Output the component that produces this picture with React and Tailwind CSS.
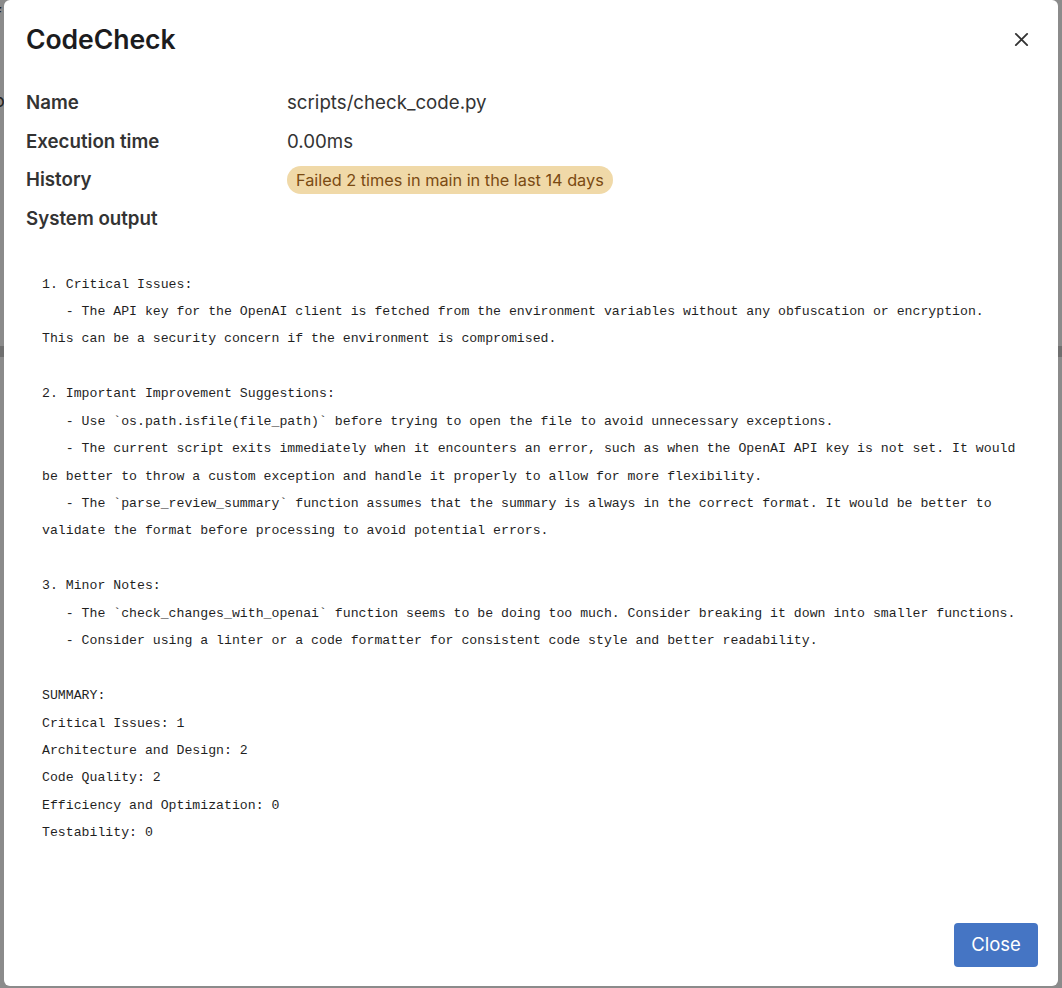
import React from "react";

const lines = [
  "1. Critical Issues:",
  "   - The API key for the OpenAI client is fetched from the environment variables without any obfuscation or encryption.",
  "This can be a security concern if the environment is compromised.",
  "",
  "2. Important Improvement Suggestions:",
  "   - Use `os.path.isfile(file_path)` before trying to open the file to avoid unnecessary exceptions.",
  "   - The current script exits immediately when it encounters an error, such as when the OpenAI API key is not set. It would",
  "be better to throw a custom exception and handle it properly to allow for more flexibility.",
  "   - The `parse_review_summary` function assumes that the summary is always in the correct format. It would be better to",
  "validate the format before processing to avoid potential errors.",
  "",
  "3. Minor Notes:",
  "   - The `check_changes_with_openai` function seems to be doing too much. Consider breaking it down into smaller functions.",
  "   - Consider using a linter or a code formatter for consistent code style and better readability.",
  "",
  "SUMMARY:",
  "Critical Issues: 1",
  "Architecture and Design: 2",
  "Code Quality: 2",
  "Efficiency and Optimization: 0",
  "Testability: 0",
];

function Strip({ side }) {
  return (
    <div className="w-[4px] h-full flex flex-col overflow-hidden">
      <div className="h-[346px] relative overflow-hidden">
        {side === "left" && (
          <>
            <span className="absolute left-[-5px] top-[4px] text-[18px] text-[#222] leading-[22px] font-['Inter',sans-serif]">f</span>
            <span className="absolute left-[-6px] top-[90px] text-[18px] text-[#222] leading-[22px] font-['Inter',sans-serif]">o</span>
          </>
        )}
      </div>
      <div className="h-[11px] bg-[#6f6f6f]"></div>
      <div className="flex-1"></div>
    </div>
  );
}

export default function App() {
  return (
    <div className="w-full h-[988px] bg-[#8b8b8b] flex overflow-hidden font-['Inter',sans-serif]">
      <Strip side="left" />
      <div className="flex-1 h-[986px] bg-white rounded-[6px] flex flex-col pl-[22px] pr-[20px]">
        <div className="flex items-center justify-between pt-[23px]">
          <h1 className="text-[26.6px] leading-[32px] font-semibold text-[#1c1c1e] tracking-[-0.1px]">CodeCheck</h1>
          <button className="w-[24px] h-[24px] flex items-center justify-center mr-[5px] text-[#333]">
            <svg width="15" height="15" viewBox="0 0 16 16" fill="none" stroke="currentColor" strokeWidth="2" strokeLinecap="round">
              <path d="M2 2L14 14M14 2L2 14" />
            </svg>
          </button>
        </div>
        <div className="mt-[29px] grid grid-cols-[261px_1fr] text-[18.7px] text-[#333]">
          <div className="h-[38.5px] flex items-center font-semibold">Name</div>
          <div className="h-[38.5px] flex items-center">scripts/check_code.py</div>
          <div className="h-[38.5px] flex items-center font-semibold">Execution time</div>
          <div className="h-[38.5px] flex items-center">0.00ms</div>
          <div className="h-[38.5px] flex items-center font-semibold">History</div>
          <div className="h-[38.5px] flex items-center">
            <span className="h-[28px] px-[9px] rounded-full bg-[#f0d9a8] text-[#7a4a12] text-[16.3px] leading-[28px]">
              Failed 2 times in main in the last 14 days
            </span>
          </div>
          <div className="h-[38.5px] flex items-center font-semibold">System output</div>
          <div className="h-[38.5px]"></div>
        </div>
        <div className="mt-[32.5px] px-[16px] font-['Liberation_Mono',monospace] text-[13.2px] leading-[27.45px] text-[#1f1f1f]">
          {lines.map((l, i) => (
            <div key={i} className="whitespace-pre h-[27.45px]">{l}</div>
          ))}
        </div>
        <div className="flex-1"></div>
        <div className="flex justify-end pb-[19px]">
          <button className="w-[84px] h-[44px] rounded-[4px] bg-[#4575c4] text-white text-[18.5px]">Close</button>
        </div>
      </div>
      <Strip side="right" />
    </div>
  );
}
